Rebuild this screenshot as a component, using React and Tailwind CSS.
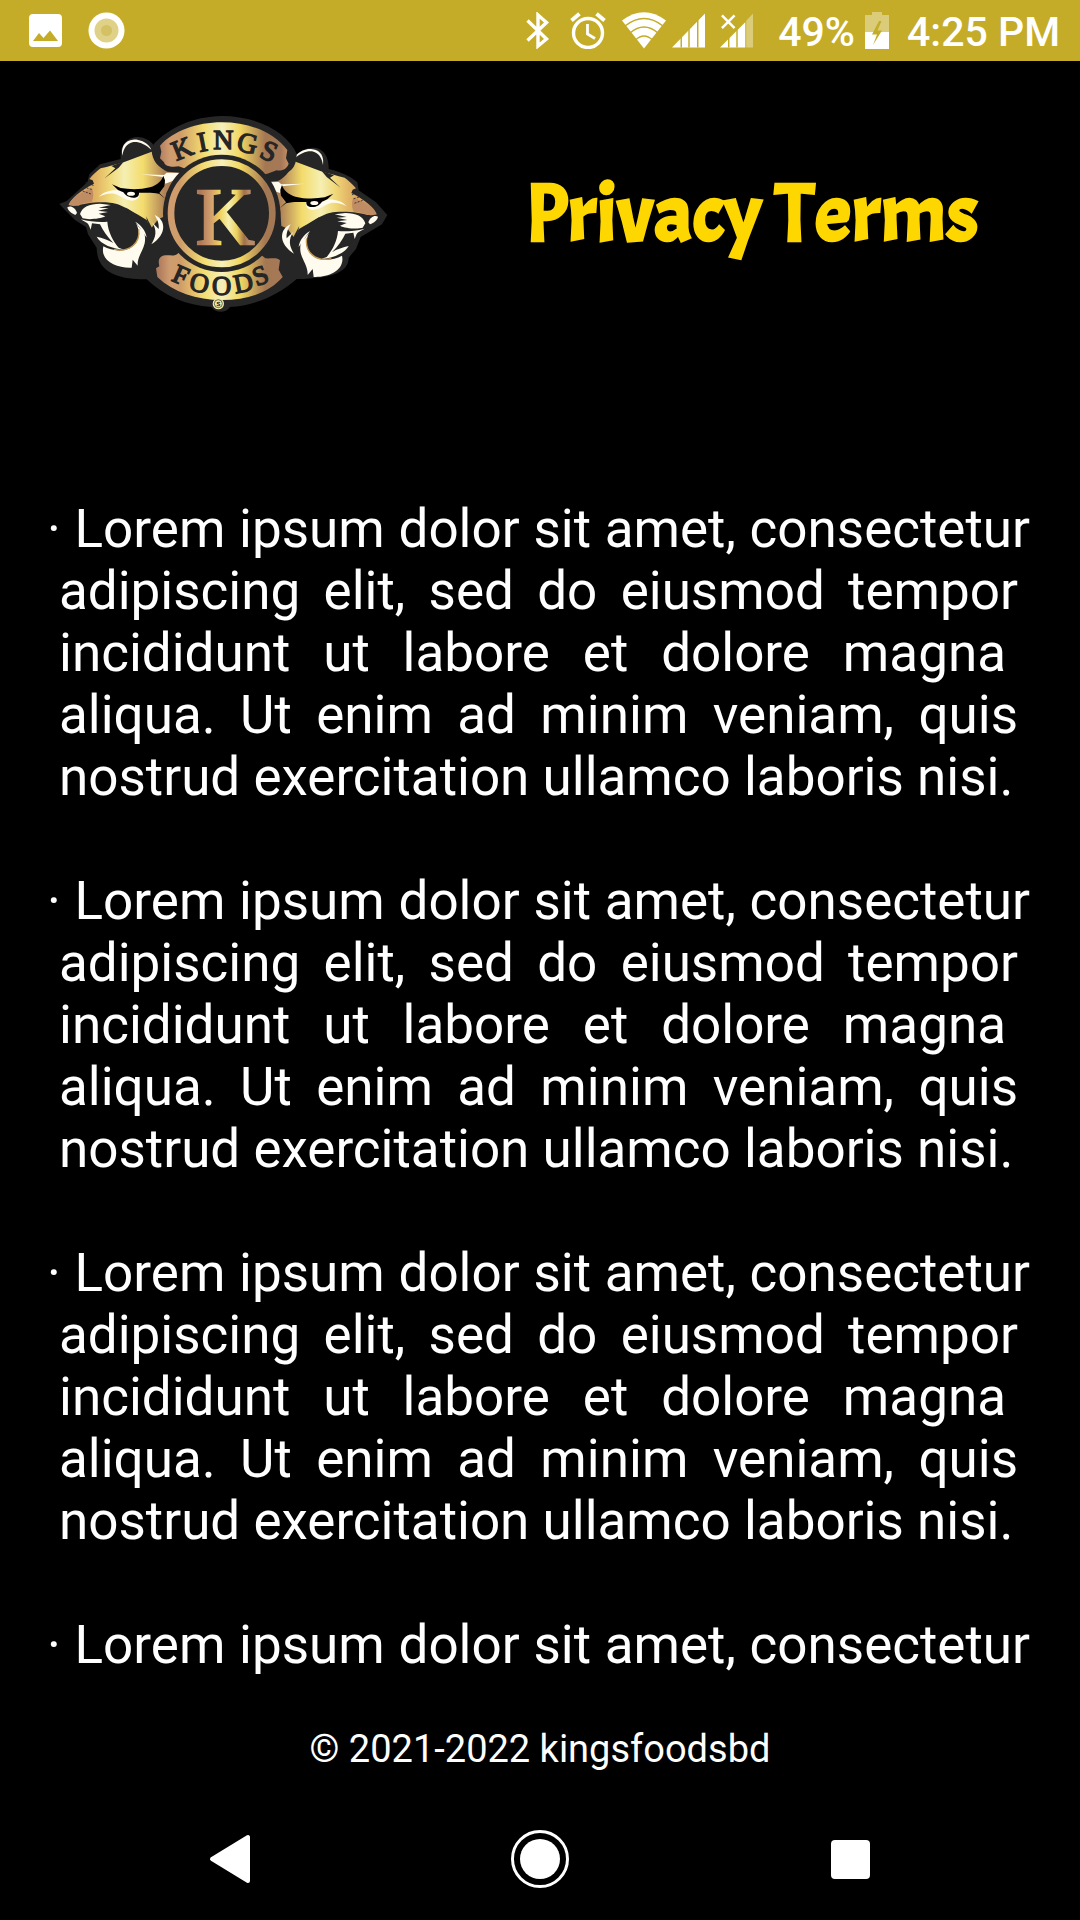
const DARK = "#262626";
const CREAM = "#fffbee";

const PARAGRAPH = [
  { text: "· Lorem ipsum dolor sit amet, consectetur", kind: "lead" },
  { text: "adipiscing elit, sed do eiusmod tempor", kind: "full" },
  { text: "incididunt ut labore et dolore magna", kind: "short" },
  { text: "aliqua. Ut enim ad minim veniam, quis", kind: "full" },
  { text: "nostrud exercitation ullamco laboris nisi.", kind: "last" },
];

const LINE_CLASS = {
  lead: "-mx-3 [text-align-last:justify]",
  full: "[text-align-last:justify]",
  short: "pr-3 [text-align-last:justify]",
  last: "text-left",
};

function Term({ lines }) {
  return (
    <li>
      <p>
        {lines.map((line) => (
          <span key={line.text} className={`block whitespace-nowrap ${LINE_CLASS[line.kind]}`}>
            {line.text}
          </span>
        ))}
      </p>
    </li>
  );
}

function StatusBar() {
  return (
    <header className="flex h-[61px] items-center bg-[#c4ac28] pl-[29px] pr-[20px] text-[41px] leading-[47px] font-medium text-white">
      <svg width="33" height="33" viewBox="0 0 33 33" aria-label="Picture">
        <path fillRule="evenodd" fill="#fff" d="M4 0H29Q33 0 33 4V29Q33 33 29 33H4Q0 33 0 29V4Q0 0 4 0ZM4 27H29L21 16.5L14.500 24L10 19Z" />
      </svg>
      <svg className="ml-[26px]" width="37" height="37" viewBox="0 0 37 37" aria-label="Recording">
        <circle cx="18.500" cy="18.500" r="18" fill="#fff" />
        <circle cx="18.500" cy="18.500" r="12" fill="#dfd187" />
        <circle cx="18.500" cy="18.500" r="5.500" fill="#d3c163" />
      </svg>
      <div className="flex-1" />
      <svg width="24" height="37" viewBox="0 0 24 37" aria-label="Bluetooth">
        <path fill="none" stroke="#fff" strokeWidth="3.400" d="M1.500 8.500L20.500 27L12 34V3L20.500 10.500L1.500 28.500" />
      </svg>
      <svg className="ml-5" width="36" height="37" viewBox="0 0 36 37" aria-label="Alarm">
        <g fill="none" stroke="#fff">
          <circle cx="18" cy="21" r="14.500" strokeWidth="3.400" />
          <path strokeWidth="2.800" d="M17.500 12V22L25 26.500" />
          <path strokeWidth="4" d="M1.500 8.500L9.500 1.800M34.500 8.500L26.500 1.800" />
        </g>
      </svg>
      <svg className="ml-4" width="44" height="37" viewBox="0 0 44 37" aria-label="Wi-Fi">
        <path fill="#fff" d="M22 36.500L0 8.500Q22 -8 44 8.500Z" />
        <g fill="none" stroke="#c4ac28" strokeWidth="1.500">
          <path d="M3 14Q22 -1 41 14" />
          <path d="M8 21Q22 9 36 21" />
          <path d="M13.500 28Q22 20 30.500 28" />
        </g>
      </svg>
      <svg className="ml-[6px]" width="34" height="35" viewBox="0 0 35 35" aria-label="Signal">
        <path fill="#fff" d="M0 35L34 0V35Z" />
        <path stroke="#c4ac28" strokeWidth="1.500" d="M9.500 20V35M17.500 12V35M26.500 4V35" />
      </svg>
      <svg className="ml-[14px]" width="34" height="35" viewBox="0 0 35 35" aria-label="No data on second line">
        <path fill="#dbcc79" d="M27 7.500L34 0V35H27Z" />
        <path fill="#fff" d="M0 35L26 9V35Z" />
        <path stroke="#c4ac28" strokeWidth="1.500" d="M9 20V35M17.500 12V35" />
        <path stroke="#fff" strokeWidth="2.600" d="M2 2L15 15M15 2L2 15" />
      </svg>
      <span className="ml-6 pt-[3px]">49%</span>
      <svg className="ml-[10px]" width="24" height="37" viewBox="0 0 24 37" aria-label="Charging">
        <path fill="#dbcc79" d="M7 0H17V3H24V20H0V3H7Z" />
        <path fill="#fff" d="M0 20H24V37H0Z" />
        <path fill="#c4ac28" d="M14 9L7 22.500H12L8 33L17 18.500H12.500L16.500 9Z" />
      </svg>
      <time className="ml-[18px] pt-[3px]">4:25 PM</time>
    </header>
  );
}

function PantherHead() {
  return (
    <g>
      <path fill={CREAM} d="M217 152C211 112 240 102 262 104C285 108 300 122 304 134C285 116 265 109 250 111C230 115 221 130 217 152Z" />
      <path fill="url(#fur)" d="M56 300C62 280 92 256 132 236L128 226L118 222C130 207 142 198 152 190C175 184 200 178 225 170L305 140C312 165 325 186 352 200L398 204L372 236L350 262L345 290L342 335L325 342L302 372L290 345C275 335 255 325 234 312C215 302 200 294 180 293C140 290 105 295 85 302Z" />
      <path fill="#c08c63" d="M56 300C62 282 90 262 126 250C132 264 130 284 124 292C102 292 85 302 70 303Z" />
      <path fill={DARK} d="M221 170L206 188L164 220L196 190L184 183Z" />
      <path stroke={DARK} strokeWidth="2.500" strokeDasharray="6 4" fill="none" d="M106 232L132 242M100 246L128 254M98 258L126 268" />
      <path fill={CREAM} d="M272 208L342 210L350 203L400 204L374 226L346 236L340 216Z" />
      <path fill={CREAM} d="M146 276C160 260 182 254 206 256C222 266 238 262 268 262C270 278 260 287 246 287C226 286 212 272 196 267C178 263 162 268 146 276Z" />
      <path fill="#000" d="M186 238L212 249C240 254 272 254 300 247C322 240 336 226 340 212L345 226L343 244L328 264L347 282L328 267C306 261 285 264 267 263C268 272 262 278 250 278C234 278 226 270 220 262L204 255Z" />
      <ellipse cx="243" cy="266" rx="12" ry="6" fill={CREAM} />
      <path fill={CREAM} d="M52 307C62 301 76 308 81 324L76 330C64 325 54 318 52 307Z" />
      <path fill={CREAM} d="M90 327C96 306 118 296 150 296L182 300L146 308L176 310L144 317L174 321L146 326L166 334C150 342 115 345 98 340Z" />
      <path fill={DARK} d="M128 372L172 345C172 300 215 292 238 332C272 355 276 400 250 428C225 440 185 436 152 414Z" />
      <path fill={CREAM} d="M92 343C120 350 148 352 172 350C174 380 190 410 206 428L222 434C190 432 152 418 140 395C156 399 176 404 190 414C172 396 158 376 150 358L126 355L122 374C118 364 116 356 110 353Z" />
      <path fill={CREAM} d="M160 424C185 438 225 442 246 425C276 402 272 362 238 326C276 346 290 386 284 415C278 440 262 455 263 482L248 464L245 488C200 490 150 468 160 424Z" />
      <path fill="none" stroke="#c39a55" strokeWidth="4" d="M192 433C240 444 272 412 266 372" />
      <path fill={DARK} d="M228 308C262 330 288 352 304 384L272 372L240 334Z" />
      <path fill={DARK} d="M288 334L312 380L300 384Z" />
      <path fill={CREAM} d="M314 330C348 344 352 388 304 418C318 396 322 376 306 352L326 372C328 356 322 344 314 330Z" />
      <path fill={CREAM} d="M256 350C276 362 288 380 290 398L278 380Z" />
    </g>
  );
}

function Logo() {
  return (
    <svg className="h-auto w-[330px] shrink-0" viewBox="24 24 990 600" role="img" aria-label="Kings Foods">
      <defs>
        <linearGradient id="fur" gradientUnits="userSpaceOnUse" x1="56" y1="0" x2="390" y2="0">
          <stop offset="0" stopColor="#c08a60" />
          <stop offset="0.250" stopColor="#e2b565" />
          <stop offset="0.370" stopColor="#f0d878" />
          <stop offset="0.500" stopColor="#f5efb2" />
          <stop offset="0.670" stopColor="#f3dc6c" />
          <stop offset="0.860" stopColor="#b08358" />
          <stop offset="1" stopColor="#a8785a" />
        </linearGradient>
        <linearGradient id="ribbon" gradientUnits="userSpaceOnUse" x1="320" y1="0" x2="712" y2="0">
          <stop offset="0" stopColor="#a8765a" />
          <stop offset="0.100" stopColor="#cf9c70" />
          <stop offset="0.180" stopColor="#cf9c68" />
          <stop offset="0.360" stopColor="#f3dd70" />
          <stop offset="0.500" stopColor="#f6f0bb" />
          <stop offset="0.640" stopColor="#f1d762" />
          <stop offset="0.830" stopColor="#a57853" />
          <stop offset="0.950" stopColor="#a67858" />
          <stop offset="1" stopColor="#c08c62" />
        </linearGradient>
        <linearGradient id="letter" gradientUnits="userSpaceOnUse" x1="452" y1="0" x2="597" y2="0">
          <stop offset="0" stopColor="#b07a58" />
          <stop offset="0.200" stopColor="#cf9c6c" />
          <stop offset="0.420" stopColor="#f1d660" />
          <stop offset="0.580" stopColor="#f5efb2" />
          <stop offset="0.750" stopColor="#ecd05c" />
          <stop offset="0.900" stopColor="#a27048" />
          <stop offset="1" stopColor="#b88a68" />
        </linearGradient>
      </defs>
      <path
        fill={DARK}
        d="M28 297L50 288L112 232L118 208L150 178L212 162C206 90 280 78 312 122C350 70 430 34 515 33C620 33 712 80 742 150C765 118 838 112 836 192C870 200 900 212 922 232L926 256L978 292L1012 330L996 358L932 396L918 432L896 458C896 500 850 520 740 522C690 566 620 602 540 606C524 628 494 622 484 606C410 602 340 572 290 523C220 524 140 510 140 428L114 388L108 366L76 346L48 318Z"
      />
      <PantherHead />
      <g transform="translate(1036 28) scale(-1 1)">
        <PantherHead />
      </g>
      <path fill={DARK} d="M306 125C380 15 660 15 740 150C738 190 720 206 690 206L640 212L400 201L356 197C320 190 302 160 306 125Z" />
      <path fill="url(#ribbon)" d="M330 122C370 78 440 52 515 52C600 52 672 82 712 135L708 160L716 176C710 196 690 198 680 196L652 206L515 230L386 184C366 188 344 184 342 172L330 160L334 140Z" />
      <path fill="url(#ribbon)" d="M386 443C374 456 364 450 346 451C326 454 324 466 328 484L318 490L322 516C370 562 440 585 515 585C600 585 660 560 698 516L686 494L690 466C680 456 660 462 646 460L630 447L515 400Z" />
      <circle cx="515" cy="325" r="176" fill={DARK} />
      <circle cx="515" cy="325" r="152" fill="none" stroke="url(#ribbon)" strokeWidth="20" />
      <g fontFamily="'Liberation Serif', serif" textAnchor="middle" fill={DARK} stroke={DARK} strokeWidth="4">
        <g fontSize="84">
          <text transform="translate(407 157) rotate(-22)">K</text>
          <text transform="translate(462 138) rotate(-11)">I</text>
          <text transform="translate(520 133)">N</text>
          <text transform="translate(587 142) rotate(12)">G</text>
          <text transform="translate(646 164) rotate(24)">S</text>
        </g>
        <g fontSize="80">
          <text transform="translate(382 535) rotate(24)">F</text>
          <text transform="translate(443 560) rotate(12)">O</text>
          <text transform="translate(515 569)">O</text>
          <text transform="translate(585 560) rotate(-11)">D</text>
          <text transform="translate(641 536) rotate(-22)">S</text>
        </g>
        <text x="525" y="416" fontSize="244" fill="url(#letter)" stroke="url(#letter)" strokeWidth="7">
          K
        </text>
        <circle cx="505" cy="596" r="17" fill="#f3eca8" stroke="none" />
        <circle cx="505" cy="596" r="12" fill="none" strokeWidth="2" />
        <text x="505" y="603" fontSize="21" strokeWidth="1">S</text>
      </g>
    </svg>
  );
}

function NavBar() {
  return (
    <nav className="grid h-[122px] grid-cols-3 px-[75px]">
      <button aria-label="Back" className="flex items-center justify-center">
        <svg width="42" height="50" viewBox="0 0 42 50">
          <path fill="#fff" stroke="#fff" strokeWidth="4" strokeLinejoin="round" d="M3 25L39 3V47Z" />
        </svg>
      </button>
      <button aria-label="Home" className="flex items-center justify-center">
        <svg width="58" height="58" viewBox="0 0 58 58">
          <circle cx="29" cy="29" r="27.500" fill="none" stroke="#fff" strokeWidth="3" />
          <circle cx="29" cy="29" r="20" fill="#fff" />
        </svg>
      </button>
      <button aria-label="Recent apps" className="flex items-center justify-center">
        <span className="size-[39px] rounded-[4px] bg-white" />
      </button>
    </nav>
  );
}

export default function App() {
  return (
    <div className="flex min-h-screen flex-col bg-black font-['Roboto',sans-serif] text-white">
      <StatusBar />
      <div className="flex items-center gap-10 pt-[52px] pr-1 pl-[58px]">
        <Logo />
        <h1 className="flex-1 pt-[2px] text-center font-['Acme','Liberation_Sans_Narrow','Lato',sans-serif] text-[82px] leading-[96px] font-bold whitespace-nowrap text-[#ffd700]">
          Privacy Terms
        </h1>
      </div>
      <main className="mt-[185px] flex-1 pr-[62px] pl-[59px]">
        <ul className="flex flex-col gap-[62px] text-[53px] leading-[62px]">
          <Term lines={PARAGRAPH} />
          <Term lines={PARAGRAPH} />
          <Term lines={PARAGRAPH} />
          <Term lines={PARAGRAPH.slice(0, 1)} />
        </ul>
      </main>
      <footer className="pb-[24px] text-center text-[38px] leading-[50px]">© 2021-2022 kingsfoodsbd</footer>
      <NavBar />
    </div>
  );
}
